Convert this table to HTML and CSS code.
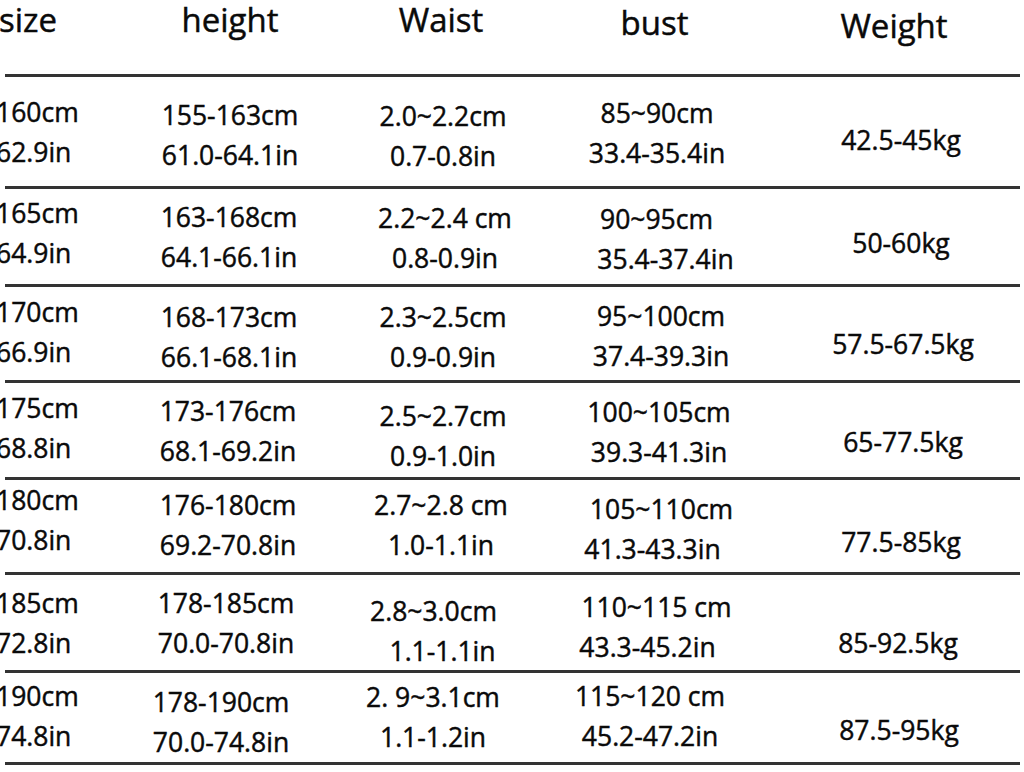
FILE: index.html
```html
<!DOCTYPE html>
<html lang="en">
<head>
<meta charset="utf-8">
<title>Size chart</title>
<link rel="stylesheet" href="styles.css">
</head>
<body>
<div class="chart">
  <div class="row head">
    <div class="h h-size">size</div>
    <div class="h h-height">height</div>
    <div class="h h-waist">Waist</div>
    <div class="h h-bust">bust</div>
    <div class="h h-weight">Weight</div>
  </div>

  <div class="row r1">
    <div class="c c-size"><span>160cm</span><span>62.9in</span></div>
    <div class="c c-height"><span>155-163cm</span><span>61.0-64.1in</span></div>
    <div class="c c-waist"><span>2.0~2.2cm</span><span>0.7-0.8in</span></div>
    <div class="c c-bust"><span>85~90cm</span><span>33.4-35.4in</span></div>
    <div class="c c-weight"><span>42.5-45kg</span></div>
  </div>

  <div class="row r2">
    <div class="c c-size"><span>165cm</span><span>64.9in</span></div>
    <div class="c c-height"><span>163-168cm</span><span>64.1-66.1in</span></div>
    <div class="c c-waist"><span>2.2~2.4 cm</span><span>0.8-0.9in</span></div>
    <div class="c c-bust"><span class="nudge-l">90~95cm</span><span class="nudge-r">35.4-37.4in</span></div>
    <div class="c c-weight"><span>50-60kg</span></div>
  </div>

  <div class="row r3">
    <div class="c c-size"><span>170cm</span><span>66.9in</span></div>
    <div class="c c-height"><span>168-173cm</span><span>66.1-68.1in</span></div>
    <div class="c c-waist"><span>2.3~2.5cm</span><span>0.9-0.9in</span></div>
    <div class="c c-bust"><span>95~100cm</span><span>37.4-39.3in</span></div>
    <div class="c c-weight"><span>57.5-67.5kg</span></div>
  </div>

  <div class="row r4">
    <div class="c c-size"><span>175cm</span><span>68.8in</span></div>
    <div class="c c-height"><span>173-176cm</span><span>68.1-69.2in</span></div>
    <div class="c c-waist"><span>2.5~2.7cm</span><span>0.9-1.0in</span></div>
    <div class="c c-bust"><span>100~105cm</span><span>39.3-41.3in</span></div>
    <div class="c c-weight"><span>65-77.5kg</span></div>
  </div>

  <div class="row r5">
    <div class="c c-size"><span>180cm</span><span>70.8in</span></div>
    <div class="c c-height"><span>176-180cm</span><span>69.2-70.8in</span></div>
    <div class="c c-waist"><span>2.7~2.8 cm</span><span>1.0-1.1in</span></div>
    <div class="c c-bust"><span class="nudge-r">105~110cm</span><span class="nudge-l">41.3-43.3in</span></div>
    <div class="c c-weight"><span>77.5-85kg</span></div>
  </div>

  <div class="row r6">
    <div class="c c-size"><span>185cm</span><span>72.8in</span></div>
    <div class="c c-height"><span>178-185cm</span><span>70.0-70.8in</span></div>
    <div class="c c-waist"><span class="nudge-l">2.8~3.0cm</span><span class="nudge-r">1.1-1.1in</span></div>
    <div class="c c-bust"><span class="nudge-r">110~115 cm</span><span class="nudge-l">43.3-45.2in</span></div>
    <div class="c c-weight"><span>85-92.5kg</span></div>
  </div>

  <div class="row r7">
    <div class="c c-size"><span>190cm</span><span>74.8in</span></div>
    <div class="c c-height"><span>178-190cm</span><span>70.0-74.8in</span></div>
    <div class="c c-waist"><span>2. 9~3.1cm</span><span>1.1-1.2in</span></div>
    <div class="c c-bust"><span>115~120 cm</span><span>45.2-47.2in</span></div>
    <div class="c c-weight"><span>87.5-95kg</span></div>
  </div>
</div>
</body>
</html>
```

FILE: styles.css
```css
html, body {
  margin: 0;
  padding: 0;
  background: #ffffff;
}

body {
  width: 1024px;
  height: 772px;
  overflow: hidden;
  font-family: "Open Sans", "Noto Sans", sans-serif;
  font-weight: 400;
  color: #0a0a0a;
  -webkit-text-stroke: 0.45px #0a0a0a;
}

.chart {
  display: flex;
  flex-direction: column;
}

.row {
  display: grid;
  grid-template-columns: 135px 180px 246px 180px 274px;
  width: 1015px;
  margin-left: 5px;
  box-sizing: border-box;
  border-bottom: 3px solid #333333;
}

/* header */
.head {
  height: 77px;
  align-items: start;
}

.h {
  font-size: 33px;
  line-height: 40px;
  text-align: center;
}

.h-size {
  text-align: left;
  margin-left: -6px;
}

.h-waist  { padding-right: 4px; }
.h-bust   { padding-top: 3px; padding-right: 3px; }
.h-weight { padding-top: 6px; padding-left: 22px; }

/* body rows: height, and per-row nudges of each cell (x / y) */
.r1 { height: 112px; --sy: 0px;  --hx: 0px;   --hy: 3px;  --wx: 0px;   --wy: 4px;  --bx: 1px;  --by: 1px;  --kx: 0px;  --ky: 8px; }
.r2 { height: 98px;  --sy: -4px; --hx: -1px;  --hy: 0px;  --wx: 2px;   --wy: 1px;  --bx: 5px;  --by: 2px;  --kx: 0px;  --ky: 6px; }
.r3 { height: 96px;  --sy: -2px; --hx: -1px;  --hy: 3px;  --wx: 0px;   --wy: 3px;  --bx: 5px;  --by: 2px;  --kx: 2px;  --ky: 10px; }
.r4 { height: 97px;  --sy: -2px; --hx: -2px;  --hy: 1px;  --wx: 0px;   --wy: 6px;  --bx: 3px;  --by: 2px;  --kx: 2px;  --ky: 12px; }
.r5 { height: 95px;  --sy: -6px; --hx: -2px;  --hy: -1px; --wx: -2px;  --wy: -1px; --bx: 1px;  --by: 3px;  --kx: 0px;  --ky: 16px; }
.r6 { height: 98px;  --sy: 0px;  --hx: -4px;  --hy: 0px;  --wx: -5px;  --wy: 8px;  --bx: -4px; --by: 4px;  --kx: -3px; --ky: 20px; }
.r7 { height: 92px;  --sy: -2px; --hx: -9px;  --hy: 4px;  --wx: -10px; --wy: -1px; --bx: -6px; --by: -2px; --kx: -2px; --ky: 12px; }

.c {
  display: flex;
  flex-direction: column;
  justify-content: center;
  align-items: center;
  font-size: 26.5px;
  line-height: 40px;
  white-space: nowrap;
}

.c-size {
  align-items: flex-start;
  margin-left: -9px;
  margin-top: var(--sy);
  margin-bottom: calc(var(--sy) * -1);
}

.c-height {
  margin-left: var(--hx);
  margin-right: calc(var(--hx) * -1);
  margin-top: var(--hy);
  margin-bottom: calc(var(--hy) * -1);
}

.c-waist {
  margin-left: var(--wx);
  margin-right: calc(var(--wx) * -1);
  margin-top: var(--wy);
  margin-bottom: calc(var(--wy) * -1);
}

.c-bust {
  margin-left: var(--bx);
  margin-right: calc(var(--bx) * -1);
  margin-top: var(--by);
  margin-bottom: calc(var(--by) * -1);
}

.c-weight {
  padding-left: 36px;
  margin-left: var(--kx);
  margin-right: calc(var(--kx) * -1);
  margin-top: var(--ky);
  margin-bottom: calc(var(--ky) * -1);
}

/* lines within one cell that sit a little off the shared centre */
.nudge-l { margin-right: 9px; }
.nudge-r { margin-left: 9px; }
```
